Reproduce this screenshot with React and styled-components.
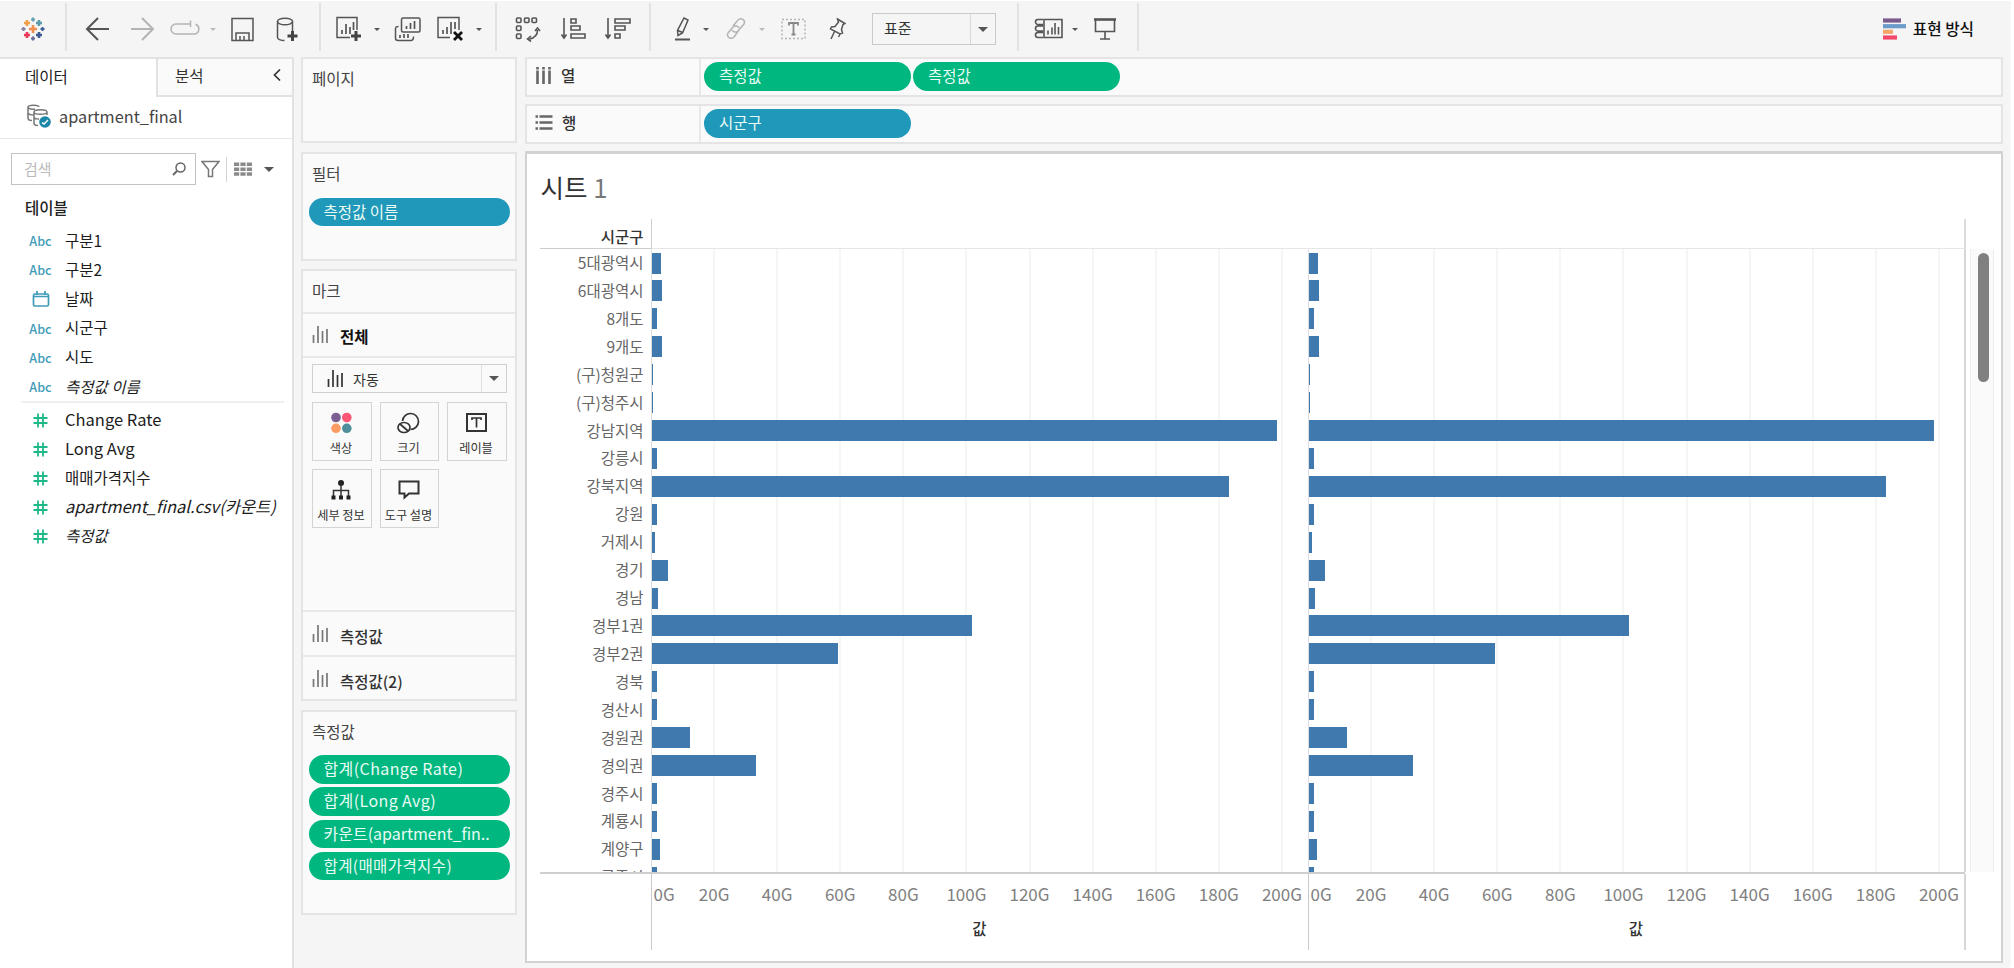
import styled, { createGlobalStyle } from "styled-components";

const GlobalStyle = createGlobalStyle`
  * {
    box-sizing: border-box;
  }

  body {
    margin: 0;
    background: #fff;
    color: #333;
    font-family: "Noto Sans CJK KR", "Noto Sans", sans-serif;
    font-size: 15.5px;
    overflow: hidden;
  }
`;

const Window = styled.div`
  width: 2009px;
  height: 968px;
  padding-top: 1px;
  background: #fff;
  display: flex;
  flex-direction: column;
  box-shadow: 3px 0 0 -1px #f6f6f6;
`;

const Toolbar = styled.header`
  height: 56px;
  flex: none;
  display: flex;
  align-items: center;
  background: #f5f5f5;
`;

const Tool = styled.span`
  display: flex;
  flex: none;
  margin-left: ${({ $gap }) => $gap}px;
  color: ${({ $muted }) => ($muted ? "#b4b4b4" : "#555")};
`;

const Separator = styled.span`
  width: 2px;
  height: 48px;
  margin: -4px 0 0 ${({ $gap }) => $gap}px;
  flex: none;
  background: #e2e2e2;
`;

const Caret = styled.span`
  flex: none;
  width: 0;
  height: 0;
  margin-left: ${({ $gap = 0 }) => $gap}px;
  border: ${({ $size = 4 }) => $size}px solid transparent;
  border-top-color: ${({ $muted }) => ($muted ? "#bbb" : "#555")};
  border-bottom: 0;
`;

const FitSelect = styled.div`
  width: 124px;
  height: 32px;
  flex: none;
  margin-left: 26px;
  border: 1.5px solid #cacaca;
  display: flex;
  align-items: center;
  font-size: 15px;
`;

const FitValue = styled.span`
  flex: 1;
  height: 100%;
  padding-left: 11px;
  line-height: 27px;
  border-right: 1px solid #d8d8d8;
`;

const SelectArrow = styled.span`
  width: ${({ $width }) => $width}px;
  display: flex;
  justify-content: center;
`;

const ShowMe = styled.div`
  margin: 0 35px 0 auto;
  display: flex;
  align-items: center;
  gap: 7px;
  color: #111;
  font-size: 15.7px;
  font-weight: 500;
  line-height: 22px;
  padding-bottom: 1px;
  white-space: nowrap;
`;

const Workspace = styled.div`
  flex: 1;
  display: flex;
  min-height: 0;
  background: #f5f5f5;
`;

const DataPane = styled.aside`
  width: 294px;
  flex: none;
  background: #fff;
  border-right: 2px solid #e2e2e2;
`;

const Tabs = styled.div`
  height: 40px;
  display: flex;
  border-top: 2px solid #e2e2e2;
`;

const ActiveTab = styled.div`
  width: 156px;
  padding-left: 25px;
  line-height: 34px;
  color: #222;
`;

const Tab = styled.div`
  flex: 1;
  display: flex;
  align-items: center;
  justify-content: space-between;
  padding: 0 11px 4px 17px;
  background: #fafafa;
  border-left: 2px solid #e2e2e2;
  border-bottom: 2px solid #e2e2e2;
`;

const Source = styled.div`
  height: 42px;
  display: flex;
  align-items: center;
  gap: 8px;
  padding: 0 0 3px 26px;
  border-bottom: 1.5px solid #e8e8e8;
  font-size: 16.3px;
  color: #444;
`;

const SearchRow = styled.div`
  display: flex;
  align-items: center;
  height: 32px;
  margin-top: 14px;
  padding-left: 11px;
`;

const SearchBox = styled.div`
  width: 185px;
  height: 32px;
  padding: 0 9px 1px 12px;
  margin-right: 5px;
  display: flex;
  align-items: center;
  justify-content: space-between;
  border: 1.5px solid #c3c3c3;
  color: #bbb;
  font-size: 15px;
`;

const ThinRule = styled.span`
  width: 1px;
  height: 25px;
  margin: 0 7px 0 6px;
  background: #d4d4d4;
`;

const TablesLabel = styled.div`
  margin: 10px 0 6px 25px;
  line-height: 24px;
  font-weight: 500;
  color: #222;
`;

const Field = styled.div`
  height: 29.2px;
  display: flex;
  align-items: center;
  white-space: nowrap;
  color: #1c1c1c;
  font-size: ${({ $latin }) => ($latin ? 16.5 : 15.5)}px;
  font-style: ${({ $italic }) => ($italic ? "italic" : "normal")};
`;

const FieldIcon = styled.span`
  width: 23px;
  margin: 3px 13px 0 29px;
  display: flex;
  justify-content: center;
  font: 500 12.6px/16px "Noto Sans CJK KR", sans-serif;
  color: ${({ $measure }) => ($measure ? "#1fb888" : "#3f9bb8")};
`;

const FieldRule = styled.div`
  height: 2px;
  margin: 1px 8px 1px 21px;
  background: #efefef;
`;

const Cards = styled.div`
  width: 216px;
  flex: none;
  margin-left: 7px;
  display: flex;
  flex-direction: column;
  gap: 8.5px;
`;

const Card = styled.section`
  height: ${({ $height }) => $height}px;
  flex: none;
  background: #fafafa;
  border: 2px solid #e4e4e4;
`;

const CardTitle = styled.h3`
  margin: 0;
  padding: 7px 0 0 9px;
  height: ${({ $height = 34 }) => $height}px;
  font-size: 15.5px;
  font-weight: 400;
  line-height: 24px;
  color: #444;
`;

const Pill = styled.div`
  width: ${({ $width = 201 }) => $width}px;
  height: 28.5px;
  border-radius: 15px;
  padding-left: 15px;
  line-height: 26px;
  white-space: nowrap;
  color: #e9fbf5;
  font-size: ${({ $latin }) => ($latin ? 16 : 15.5)}px;
  letter-spacing: ${({ $wide }) => ($wide ? 0.4 : 0)}px;
  background: ${({ $kind }) => ($kind === "measure" ? "#00b780" : "#2098b9")};
`;

const PillStack = styled.div`
  display: flex;
  flex-direction: column;
  gap: 3.8px;
  margin: ${({ $top }) => $top}px 0 0 5.5px;
`;

const MarkRow = styled.div`
  height: ${({ $height }) => $height}px;
  display: flex;
  align-items: center;
  gap: 11px;
  padding: ${({ $drop = 0 }) => $drop}px 0 0 9px;
  border-top: 2px solid #e8e8e8;
  font-weight: ${({ $strong }) => ($strong ? 700 : 500)};
  color: ${({ $strong }) => ($strong ? "#111" : "#333")};

  svg {
    margin-top: -4px;
  }
`;

const MarkBody = styled.div`
  height: 254px;
  border-top: 2px solid #e8e8e8;
  padding: 6px 8px 0 9px;
`;

const MarkSelect = styled.div`
  height: 29px;
  display: flex;
  align-items: center;
  border: 1.5px solid #cfcfcf;
  padding-left: 14px;
  gap: 9px;
  font-size: 14px;
  line-height: 20px;
`;

const MarkSelectArrow = styled.span`
  height: 100%;
  width: 25px;
  margin-left: auto;
  display: flex;
  align-items: center;
  justify-content: center;
  border-left: 1px solid #e0e0e0;
`;

const MarkGrid = styled.div`
  display: grid;
  grid-template-columns: 60px 59px 60px;
  grid-auto-rows: 59px;
  gap: 8px;
  margin-top: 8.5px;
`;

const MarkTile = styled.div`
  border: 1.5px solid #d4d4d4;
  display: flex;
  flex-direction: column;
  align-items: center;
  padding: 9px 2px 0 0;
  font-size: 12.2px;
  line-height: 18px;
  gap: 5px;
  white-space: nowrap;
  color: #333;
`;

const Main = styled.main`
  width: 1478px;
  margin-left: 8px;
  display: flex;
  flex-direction: column;
`;

const Shelf = styled.div`
  height: 39.5px;
  flex: none;
  margin-bottom: 7.5px;
  display: flex;
  align-items: center;
  background: #fafafa;
  border: 2px solid #e4e4e4;
`;

const ShelfLabel = styled.div`
  width: 174px;
  height: 100%;
  padding: 0 0 3px 8px;
  margin-right: 3px;
  display: flex;
  align-items: center;
  gap: 9px;
  border-right: 2px solid #e8e8e8;
  font-weight: 500;
`;

const ShelfPills = styled.div`
  display: flex;
  gap: 2.5px;
  margin-top: -1px;
`;

const Sheet = styled.section`
  height: 812px;
  flex: none;
  background: #fff;
  border: 2px solid #d2d2d2;
  border-top-width: 3px;
  padding-left: 12.5px;
`;

const SheetTitle = styled.h1`
  margin: 0;
  height: 65px;
  padding: 15px 0 0 1px;
  font-size: 25.6px;
  line-height: 36px;
  font-weight: 400;
  color: #333;
`;

const SheetNumber = styled.span`
  color: #777;
`;

const VizRow = styled.div`
  display: flex;
  height: ${({ $height }) => $height}px;
`;

const RowHeader = styled.div`
  width: 111px;
  flex: none;
  height: 100%;
  overflow: hidden;
  text-align: right;
  border-bottom: ${({ $bordered }) => ($bordered ? "1.5px solid #ccc" : "0")};
`;

const HeaderTitle = styled.div`
  padding: 5px 7px 0 0;
  line-height: 24px;
  font-weight: 500;
  color: #333;
`;

const RowLabel = styled.div`
  height: 27.93px;
  padding-right: 7px;
  line-height: 27px;
  color: #666;
  white-space: nowrap;
`;

const Pane = styled.div`
  width: ${({ $width }) => $width}px;
  flex: none;
  height: 100%;
  overflow: hidden;
  border-left: 1.5px solid ${({ $soft }) => ($soft ? "#dedede" : "#cacaca")};
`;

const HeaderPane = styled.div`
  width: 1315px;
  flex: none;
  border-left: 1.5px solid #ccc;
  border-right: 2px solid #dcdcdc;
  border-bottom: 1.5px solid #e6e6e6;
`;

const BarPane = styled(Pane)`
  background: repeating-linear-gradient(
    to right,
    transparent 0 61.1px,
    #f5f5f5 61.1px 63.1px
  );
`;

const BarRow = styled.div`
  height: 27.93px;
  padding-top: 3.5px;
`;

const Bar = styled.div`
  height: 21px;
  background: #3f79ad;
`;

const EndRule = styled.span`
  width: 2px;
  flex: none;
  height: 100%;
  background: #d6d6d6;
`;

const ScrollTrack = styled.div`
  width: 24px;
  height: 100%;
  margin-left: 4px;
  padding: 4px 0 0 7px;
  background: #fafafa;
  border: solid #eee;
  border-width: 0 1px;
`;

const ScrollThumb = styled.div`
  width: 11px;
  height: 129px;
  border-radius: 6px;
  background: #808080;
`;

const BottomRule = styled.div`
  width: 1425px;
  height: 2px;
  background: #cfcfcf;
`;

const Ticks = styled.div`
  display: grid;
  grid-template-columns: 31px repeat(10, 63.1px);
  padding-top: 7px;
  line-height: 26px;
  font-size: 17px;
  color: #808080;
  text-align: center;
  white-space: nowrap;
`;

const ZeroTick = styled.span`
  text-align: left;
  padding-left: 2px;
`;

const AxisTitle = styled.div`
  margin-top: 8px;
  line-height: 26px;
  text-align: center;
  font-weight: 500;
`;

const FIELDS = [
  { name: "구분1", type: "Abc" },
  { name: "구분2", type: "Abc" },
  { name: "날짜", type: "date" },
  { name: "시군구", type: "Abc" },
  { name: "시도", type: "Abc" },
  { name: "측정값 이름", type: "Abc", italic: true },
];

const MEASURES = [
  { name: "Change Rate", latin: true },
  { name: "Long Avg", latin: true },
  { name: "매매가격지수" },
  { name: "apartment_final.csv(카운트)", italic: true, latin: true },
  { name: "측정값", italic: true },
];

const REGIONS = [
  ["5대광역시", 9],
  ["6대광역시", 10],
  ["8개도", 5],
  ["9개도", 10],
  ["(구)청원군", 1],
  ["(구)청주시", 1],
  ["강남지역", 625],
  ["강릉시", 5],
  ["강북지역", 577.5],
  ["강원", 5],
  ["거제시", 3],
  ["경기", 16],
  ["경남", 6],
  ["경부1권", 320.5],
  ["경부2권", 186],
  ["경북", 5],
  ["경산시", 5],
  ["경원권", 38.5],
  ["경의권", 104],
  ["경주시", 5],
  ["계룡시", 5],
  ["계양구", 8],
  ["공주시", 5],
];

const TICKS = [20, 40, 60, 80, 100, 120, 140, 160, 180, 200];

function Svg({ w, h, sw = 1.5, children }) {
  return (
    <svg
      width={w}
      height={h}
      viewBox={`0 0 ${w} ${h}`}
      fill="none"
      stroke="currentColor"
      strokeWidth={sw}
    >
      {children}
    </svg>
  );
}

function Plus({ x, y }) {
  return <path d={`M${x - 5} ${y}h10M${x} ${y - 5}v10`} stroke="#444" strokeWidth="3" />;
}

function Logo() {
  const cross = (x, y, r, color) => (
    <path
      d={`M${x - r} ${y}h${r * 2}M${x} ${y - r}v${r * 2}`}
      stroke={color}
      strokeWidth={r > 2.5 ? 2.6 : 2}
    />
  );
  return (
    <Svg w={24} h={24}>
      {cross(12, 12, 4, "#f28e4b")}
      {cross(6, 6, 3, "#f0a04b")}
      {cross(18, 6, 3, "#5b9aa8")}
      {cross(6, 18, 3, "#e8385c")}
      {cross(18, 18, 3, "#3d5a94")}
      {cross(12, 2.5, 2, "#6aa3b5")}
      {cross(12, 21.5, 2, "#6b6fa0")}
      {cross(2.5, 12, 2, "#8a80a8")}
      {cross(21.5, 12, 2, "#40619a")}
    </Svg>
  );
}

function BarsIcon({ muted }) {
  return (
    <Svg w={17} h={19} sw={1.7}>
      <path
        d="M1.5 10v8M6 1v17M10.5 6v12M15 4v14"
        stroke={muted ? "#777" : "#333"}
      />
    </Svg>
  );
}

function DateIcon() {
  return (
    <Svg w={18} h={16} sw={1.7}>
      <rect x="1.5" y="3" width="15" height="12" rx="1.5" />
      <path d="M2 5.5h14M5 0v4M13 0v4" />
    </Svg>
  );
}

function HashIcon() {
  return (
    <Svg w={15} h={15} sw={1.8}>
      <path d="M5 .5v14M10 .5v14M.5 5h14M.5 10h14" />
    </Svg>
  );
}

function TopToolbar() {
  return (
    <Toolbar>
      <Tool $gap={21}><Logo /></Tool>
      <Separator $gap={20} />
      <Tool $gap={18}>
        <Svg w={25} h={24} sw={2}><path d="M24 12H2M13 1L2 12l11 11" /></Svg>
      </Tool>
      <Tool $gap={20} $muted>
        <Svg w={25} h={24} sw={2}><path d="M1 12h22M12 1l11 11-11 11" /></Svg>
      </Tool>
      <Tool $gap={15} $muted>
        <Svg w={30} h={24}>
          <path d="M20 7H6a5 5 0 0 0 0 10h18a5 5 0 0 0 1.500-9.700M20.500 3.500V10" />
        </Svg>
      </Tool>
      <Caret $gap={10} $size={3.5} $muted />
      <Tool $gap={15}>
        <Svg w={23} h={25}>
          <path d="M1 1.500h21v22H1zM5 23v-7h13v7M9 23v-4M13 23v-4" />
        </Svg>
      </Tool>
      <Tool $gap={22}>
        <Svg w={23} h={25}>
          <ellipse cx="9" cy="4.500" rx="7.500" ry="3.300" />
          <path d="M1.500 4.500v16c0 1.500 3 3 7 3M16.500 4.500V14" />
          <Plus x={16.5} y={19} />
        </Svg>
      </Tool>
      <Separator $gap={20} />
      <Tool $gap={14}>
        <Svg w={27} h={26}>
          <path d="M15 21.500H2v-20h20V14" />
          <path d="M7 18v-4M11 18V8M15 18v-7M18.500 14V6" strokeWidth="1.700" />
          <Plus x={21} y={20} />
        </Svg>
      </Tool>
      <Caret $gap={12} $size={3.5} />
      <Tool $gap={14}>
        <Svg w={27} h={25}>
          <rect x="7.500" y="1" width="18.500" height="14" rx="1.500" />
          <path d="M4.500 9.500C2 9.500 1.500 10 1.500 12v9c0 2 .5 2.500 2.500 2.500h13c2 0 2.500-1 2.500-4" />
          <path d="M12.500 12V9M16.500 12V6M20.500 12V4M6 21v-3M10 21v-4M14 21v-4" strokeWidth="1.700" />
        </Svg>
      </Tool>
      <Tool $gap={16}>
        <Svg w={26} h={26}>
          <path d="M13 21.500H1v-20h21V14" />
          <path d="M6 18v-4M10 18v-7M14 18V6M18 13V6" strokeWidth="1.700" />
          <path d="M17 16l8 8M25 16l-8 8" stroke="#111" strokeWidth="2.800" />
        </Svg>
      </Tool>
      <Caret $gap={13} $size={3.5} />
      <Separator $gap={13} />
      <Tool $gap={18}>
        <Svg w={26} h={26} sw={1.6}>
          <rect x="1.500" y="2" width="4.500" height="4.500" rx="1" />
          <rect x="9.500" y="2" width="4.500" height="4.500" rx="1" />
          <rect x="17" y="2" width="4.500" height="4.500" rx="1" />
          <rect x="1.500" y="10" width="4.500" height="4.500" rx="1" />
          <rect x="1.500" y="18" width="4.500" height="4.500" rx="1" />
          <path d="M22.500 14c0 5-3 8-8 9M20 15l2.500-3 2.500 3M16 20l-3.500 3 3.500 2.500" />
        </Svg>
      </Tool>
      <Tool $gap={20}>
        <Svg w={26} h={24} sw={1.6}>
          <path d="M3 1v20M.5 17.500L3 21l2.500-3.500M10 2h5v4h-5zM10 9h9v4h-9zM10 17h14v4H10z" />
        </Svg>
      </Tool>
      <Tool $gap={18}>
        <Svg w={26} h={24} sw={1.6}>
          <path d="M3 1v20M.5 17.500L3 21l2.500-3.500M10 2h15v4H10zM10 9h10v4H10zM10 17h5v4h-5z" />
        </Svg>
      </Tool>
      <Separator $gap={18} />
      <Tool $gap={22}>
        <Svg w={18} h={24} sw={1.5}>
          <path d="M11 1l4 2-5.500 13-4.500 2.500-.5-5zM5 13.500l4.500 2" />
          <path d="M2 22.500h15" strokeWidth="2" />
        </Svg>
      </Tool>
      <Caret $gap={12} $size={3.5} />
      <Tool $gap={17} $muted>
        <Svg w={20} h={24} sw={1.5}>
          <path d="M7 9l5-6c3-3 8 0 6 4l-6 7c-2 2-5 1-6-1M13 13l-5 7c-3 3-8 0-6-4l5-6c2-2 5-1 6 1" />
        </Svg>
      </Tool>
      <Caret $gap={13} $size={3.5} $muted />
      <Tool $gap={16} $muted>
        <Svg w={25} h={22} sw={1.5}>
          <rect x="1" y="1.500" width="23" height="19" strokeDasharray="2 2" />
          <path d="M8 7.500V5h9v2.500M12.500 5v12M10.500 16.500h4" stroke="#888" strokeWidth="1.800" />
        </Svg>
      </Tool>
      <Tool $gap={22}>
        <Svg w={18} h={22} sw={1.5}>
          <path d="M9.500 1l7.500 4.500-2 1-1.500 5 1 3.500-2.500 1L2.500 11l1-2 3.500-.5L10.500 4zM6.500 13.500L3 21M12 16l-1.500 3" />
        </Svg>
      </Tool>
      <FitSelect>
        <FitValue>표준</FitValue>
        <SelectArrow $width={24}><Caret $size={5} /></SelectArrow>
      </FitSelect>
      <Separator $gap={21} />
      <Tool $gap={15}>
        <Svg w={30} h={22} sw={1.6}>
          <path d="M10 1.500h18v18H10zM14 16.500v-4M18 16.500v-7M21 16.500V5M24.500 16.500V9" />
          <path d="M9 1.500H4a2 2 0 0 0 0 5h5M9 8H4a2 2 0 0 0 0 5h5M9 14.500H4a2 2 0 0 0 0 5h5" />
        </Svg>
      </Tool>
      <Caret $gap={8} $size={3.5} />
      <Tool $gap={15}>
        <Svg w={25} h={24} sw={1.6}>
          <path d="M2.500 3v11.500h19V3M12 15v7M7 22h10" />
          <path d="M1 2.500h22" strokeWidth="2.600" />
        </Svg>
      </Tool>
      <Separator $gap={19} />
      <ShowMe>
        <Svg w={23} h={22} sw={4.2}>
          <path d="M0 2.500h18" stroke="#7b5a8c" />
          <path d="M0 8.200h23" stroke="#6b9bc9" />
          <path d="M0 13.800h10" stroke="#f7a66b" />
          <path d="M0 19.500h14" stroke="#f4486b" />
        </Svg>
        표현 방식
      </ShowMe>
    </Toolbar>
  );
}

function DataSidebar() {
  return (
    <DataPane>
      <Tabs>
        <ActiveTab>데이터</ActiveTab>
        <Tab>
          분석
          <Svg w={8} h={14} sw={1.7}><path d="M7 1.500L1.500 7 7 12.500" /></Svg>
        </Tab>
      </Tabs>
      <Source>
        <Svg w={25} h={24}>
          <path d="M2 3v11c0 1.500 2 2.500 4 2.500M2 3c0-2.500 11-2.500 11 0M2 3c0 2 5 2.500 7 2" stroke="#777" />
          <path d="M8 8v11c0 1.500 2 2.500 4 2.500M8 8c0-3 13-3 13 0v3M8 8c0 3 13 3 13 0M8 13c0 1.500 3 2 5 2M2 9c0 1 3 2 6 2" stroke="#777" />
          <circle cx="19" cy="18" r="5.800" fill="#1c86a8" stroke="none" />
          <path d="M16 18.500l2 1.500 4-4" stroke="#fff" />
        </Svg>
        apartment_final
      </Source>
      <SearchRow>
        <SearchBox>
          검색
          <Svg w={14} h={14}>
            <circle cx="8.500" cy="5.500" r="4.500" stroke="#666" />
            <path d="M5 9l-4 4" stroke="#666" strokeWidth="2" />
          </Svg>
        </SearchBox>
        <Svg w={19} h={18} sw={1.5}>
          <path d="M1 1.500h17l-6.500 8v7h-4v-7z" stroke="#777" />
        </Svg>
        <ThinRule />
        <Svg w={18} h={14} sw={3.6}>
          <path d="M0 2.300h18M0 7.200h18M0 12h18" stroke="#8a8a8a" strokeDasharray="5.200 1.200" />
        </Svg>
        <Caret $gap={12} $size={5.5} />
      </SearchRow>
      <TablesLabel>테이블</TablesLabel>
      {FIELDS.map((field) => (
        <Field key={field.name} $italic={field.italic}>
          <FieldIcon>{field.type === "date" ? <DateIcon /> : field.type}</FieldIcon>
          {field.name}
        </Field>
      ))}
      <FieldRule />
      {MEASURES.map((field) => (
        <Field key={field.name} $italic={field.italic} $latin={field.latin}>
          <FieldIcon $measure><HashIcon /></FieldIcon>
          {field.name}
        </Field>
      ))}
    </DataPane>
  );
}

function MarksCard() {
  return (
    <Card $height={432}>
      <CardTitle $height={41}>마크</CardTitle>
      <MarkRow $height={44} $drop={2} $strong><BarsIcon muted />전체</MarkRow>
      <MarkBody>
        <MarkSelect>
          <BarsIcon />자동
          <MarkSelectArrow><Caret $size={5} /></MarkSelectArrow>
        </MarkSelect>
        <MarkGrid>
          <MarkTile>
            <Svg w={21} h={22}>
              <g stroke="none">
                <circle cx="5" cy="5.500" r="4.800" fill="#7b5f93" />
                <circle cx="15.800" cy="5.500" r="4.800" fill="#fb5676" />
                <circle cx="5" cy="16.300" r="4.800" fill="#fb9c63" />
                <circle cx="15.800" cy="16.300" r="4.800" fill="#4f8f9b" />
              </g>
            </Svg>
            색상
          </MarkTile>
          <MarkTile>
            <Svg w={23} h={22} sw={1.7}>
              <path d="M5.500 9a8 8 0 1 1 8 8.500" />
              <ellipse cx="7" cy="15.500" rx="6" ry="5" />
              <path d="M3 12l8 7" />
            </Svg>
            크기
          </MarkTile>
          <MarkTile>
            <Svg w={21} h={22} sw={2}>
              <rect x="1" y="2" width="19" height="17" />
              <path d="M6 8V6h9v2M10.500 6v9.500" strokeWidth="1.700" />
            </Svg>
            레이블
          </MarkTile>
          <MarkTile>
            <Svg w={20} h={22} sw={1.5}>
              <circle cx="10" cy="4" r="3" fill="#222" stroke="none" />
              <path d="M10 5v12M2.500 17v-5.500h15V17" />
              <path d="M.5 18.500h4M8 18.500h4M15.500 18.500h4" stroke="#222" strokeWidth="4" />
            </Svg>
            세부 정보
          </MarkTile>
          <MarkTile>
            <Svg w={22} h={22} sw={2}>
              <path d="M1.500 2.500h19v12H11l-4.500 4v-4h-5z" />
            </Svg>
            도구 설명
          </MarkTile>
        </MarkGrid>
      </MarkBody>
      <MarkRow $height={45} $drop={4}><BarsIcon muted />측정값</MarkRow>
      <MarkRow $height={44} $drop={5}><BarsIcon muted />측정값(2)</MarkRow>
    </Card>
  );
}

function BarChart({ width: paneWidth }) {
  return (
    <BarPane $soft $width={paneWidth}>
      {REGIONS.map(([name, width]) => (
        <BarRow key={name}>
          <Bar style={{ width }} />
        </BarRow>
      ))}
    </BarPane>
  );
}

function Axis({ width }) {
  return (
    <Pane $width={width}>
      <Ticks>
        <ZeroTick>0G</ZeroTick>
        {TICKS.map((tick) => (
          <span key={tick}>{tick}G</span>
        ))}
      </Ticks>
      <AxisTitle>값</AxisTitle>
    </Pane>
  );
}

export default function App() {
  return (
    <>
      <GlobalStyle />
      <Window>
        <TopToolbar />
        <Workspace>
          <DataSidebar />
          <Cards>
            <Card $height={86}>
              <CardTitle>페이지</CardTitle>
            </Card>
            <Card $height={109}>
              <CardTitle>필터</CardTitle>
              <PillStack $top={10}>
                <Pill>측정값 이름</Pill>
              </PillStack>
            </Card>
            <MarksCard />
            <Card $height={205}>
              <CardTitle>측정값</CardTitle>
              <PillStack $top={9.5}>
                <Pill $kind="measure" $latin $wide>합계(Change Rate)</Pill>
                <Pill $kind="measure" $latin $wide>합계(Long Avg)</Pill>
                <Pill $kind="measure" $latin>카운트(apartment_fin..</Pill>
                <Pill $kind="measure" $wide>합계(매매가격지수)</Pill>
              </PillStack>
            </Card>
          </Cards>
          <Main>
            <Shelf>
              <ShelfLabel>
                <Svg w={17} h={19} sw={2.6}>
                  <path d="M2.500 1v17M8.500 1v17M14.500 1v17" stroke="#666" strokeDasharray="2.500 1 14" />
                </Svg>
                열
              </ShelfLabel>
              <ShelfPills>
                <Pill $kind="measure" $width={206.5}>측정값</Pill>
                <Pill $kind="measure" $width={206.5}>측정값</Pill>
              </ShelfPills>
            </Shelf>
            <Shelf>
              <ShelfLabel>
                <Svg w={18} h={17} sw={2.4}>
                  <path d="M.5 2.500h17M.5 8.500h17M.5 14.500h17" stroke="#666" strokeDasharray="2.500 1.500 14" />
                </Svg>
                행
              </ShelfLabel>
              <ShelfPills>
                <Pill $width={206.5}>시군구</Pill>
              </ShelfPills>
            </Shelf>
            <Sheet>
              <SheetTitle>시트 <SheetNumber>1</SheetNumber></SheetTitle>
              <VizRow $height={30}>
                <RowHeader $bordered>
                  <HeaderTitle>시군구</HeaderTitle>
                </RowHeader>
                <HeaderPane />
              </VizRow>
              <VizRow $height={623}>
                <RowHeader>
                  {REGIONS.map(([name]) => (
                    <RowLabel key={name}>{name}</RowLabel>
                  ))}
                </RowHeader>
                <BarChart width={657} />
                <BarChart width={656} />
                <EndRule />
                <ScrollTrack>
                  <ScrollThumb />
                </ScrollTrack>
              </VizRow>
              <BottomRule />
              <VizRow $height={76}>
                <RowHeader />
                <Axis width={657} />
                <Axis width={656} />
                <EndRule />
              </VizRow>
            </Sheet>
          </Main>
        </Workspace>
      </Window>
    </>
  );
}
